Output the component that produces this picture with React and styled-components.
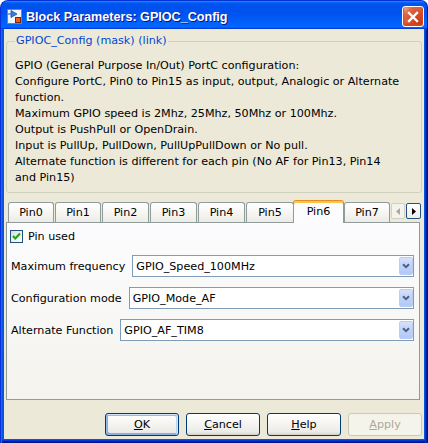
import React from 'react';
import styled, { createGlobalStyle } from 'styled-components';

const Global = createGlobalStyle`
  html, body { margin: 0; padding: 0; background: #ffffff; }
  body { font-family: "DejaVu Sans", Tahoma, sans-serif; font-size: 11.15px; color: #000; }
  #root { width: 428px; height: 443px; }
  * { box-sizing: border-box; }
`;

const Window = styled.div`
  width: 428px;
  height: 443px;
  display: flex;
  flex-direction: column;
`;

const TitleBar = styled.div`
  height: 29px;
  flex: none;
  display: flex;
  align-items: center;
  padding: 3px 3px 0 6px;
  border-top: 1px solid #0831d9;
  border-left: 1px solid #0831d9;
  border-right: 1px solid #001ea0;
  border-radius: 8px 7px 0 0;
  background: linear-gradient(180deg, #0997ff, #0053ee 8%, #0050ee 40%, #0066ff 88%, #0066ff 93%, #005bff 95%, #003dd7 96%, #003dd7);
`;

const TitleText = styled.div`
  flex: 1;
  margin-left: 4px;
  font-family: "Liberation Sans", Arial, sans-serif;
  font-weight: bold;
  font-size: 12.6px;
  color: #ffffff;
  text-shadow: 1px 1px #0f1089;
  white-space: nowrap;
`;

const CloseButton = styled.div`
  width: 22px;
  height: 21px;
  border: 1px solid #ffffff;
  border-radius: 3px;
  display: flex;
  align-items: center;
  justify-content: center;
  background: radial-gradient(circle at 85% 85%, #c23a12 0%, #d9522c 50%, #e06a48 72%, #f3b7a4 94%, #ffffff 100%);
  box-shadow: inset 0 -1px 2px 1px #d4461e;
`;

const Frame = styled.div`
  flex: 1;
  display: flex;
  padding: 0 4px 4px;
  background: #0855dd;
  box-shadow: inset 1px 0 #0831d9, inset 2px 0 #166aee, inset -1px 0 #00138c, inset -2px 0 #001ea0,
    inset -3px 0 #003bda, inset 0 -1px #00138c, inset 0 -2px #001ea0, inset 0 -3px #003bda;
`;

const Content = styled.div`
  flex: 1;
  display: flex;
  flex-direction: column;
  background: #ece9d8;
  padding: 0 2px 3px 2px;
`;

const GroupBox = styled.fieldset`
  margin: 4px 0 0 0;
  padding: 9px 8px 6px 8px;
  border: 1px solid #d0d0bf;
  border-radius: 3px;
  min-width: 0;
`;

const GroupLegend = styled.legend`
  padding: 0 1px;
  line-height: 16px;
  color: #0046d5;
`;

const Description = styled.div`
  line-height: 16px;
  white-space: nowrap;
`;

const TabArea = styled.div`
  margin: 7px 2px 0 0;
  display: flex;
  flex-direction: column;
`;

const TabStrip = styled.div`
  height: 22px;
  display: flex;
  align-items: flex-end;
  padding-left: 2px;
`;

const TabList = styled.div`
  flex: 1;
  display: flex;
  align-items: flex-end;
  gap: 1px;
  height: 100%;
`;

const Tab = styled.div`
  position: relative;
  width: ${p => (p.$active ? p.$w + 3 : p.$w)}px;
  height: ${p => (p.$active ? 23 : 20)}px;
  margin: ${p => (p.$active ? '0 -1px -1px -2px' : '0')};
  display: flex;
  align-items: center;
  justify-content: center;
  border: 1px solid #919b9c;
  border-bottom: none;
  border-radius: 3px 3px 0 0;
  background: ${p => (p.$active ? '#fcfcfe' : 'linear-gradient(180deg, #ffffff 0%, #f7f7f4 45%, #ecebe6 100%)')};
  ${p => p.$active && `
    border-top: 1px solid #e68b2c;
    box-shadow: inset 0 2px #ffc83c;
    z-index: 2;
    padding-bottom: 1px;
  `}
`;

const ScrollGroup = styled.div`
  align-self: flex-start;
  margin: 3px -1px 0 0;
  display: flex;
  gap: 1px;
`;

const ScrollButton = styled.div`
  width: ${p => p.$w}px;
  height: 16px;
  display: flex;
  align-items: center;
  justify-content: center;
  border-radius: 2px;
  border: 1px solid ${p => (p.$disabled ? '#d2d0c4' : '#1c5180')};
  background: ${p => (p.$disabled ? '#f4f3ee' : 'linear-gradient(180deg, #ffffff, #eeede8)')};
`;

const Panel = styled.div`
  height: 178px;
  border: 1px solid #919b9c;
  background: linear-gradient(180deg, #fcfcfe 0%, #f4f3ee 100%);
  padding: 7px 5px 0 4px;
  display: flex;
  flex-direction: column;
`;

const CheckRow = styled.label`
  display: flex;
  align-items: center;
  gap: 5px;
  height: 13px;
  margin-left: -1px;
`;

const CheckBox = styled.span`
  width: 13px;
  height: 13px;
  border: 1px solid #1c5180;
  background: linear-gradient(135deg, #dcdcd7 0%, #ffffff 100%);
  display: flex;
  align-items: center;
  justify-content: center;
`;

const Fields = styled.div`
  margin-top: 12px;
  display: flex;
  flex-direction: column;
  gap: 10px;
`;

const FieldRow = styled.div`
  display: flex;
  align-items: center;
  height: 22px;
`;

const FieldLabel = styled.span`
  white-space: nowrap;
`;

const Combo = styled.div`
  flex: 1;
  margin-left: 7px;
  height: 22px;
  border: 1px solid #7f9db9;
  background: #ffffff;
  display: flex;
  align-items: center;
  padding: 1px 0 1px 3px;
`;

const ComboValue = styled.span`
  flex: 1;
  white-space: nowrap;
`;

const ComboButton = styled.span`
  width: 14px;
  align-self: stretch;
  display: flex;
  align-items: center;
  justify-content: center;
  border: 1px solid #bacdf5;
  border-radius: 2px;
  background: linear-gradient(180deg, #d5e1fc 0%, #c0d2fa 50%, #b3c8f6 100%);
`;

const ButtonRow = styled.div`
  margin-top: 13px;
  display: flex;
  justify-content: flex-end;
  gap: 7px;
`;

const Button = styled.div`
  width: 74px;
  height: 23px;
  display: flex;
  align-items: center;
  justify-content: center;
  border-radius: 3px;
  border: 1px solid ${p => (p.$disabled ? '#cac8bb' : '#003c74')};
  color: ${p => (p.$disabled ? '#aca899' : '#000000')};
  background: ${p => (p.$disabled ? '#f5f4ea' : 'linear-gradient(180deg, #ffffff, #ecebe6 86%, #d6d0c5)')};
  ${p => p.$default && `
    box-shadow: inset -1px 1px #cee7ff, inset 1px 2px #98b8ea, inset -2px 2px #bcd4f6, inset 1px -1px #89ade4, inset 2px -2px #89ade4;
  `}
  u { text-decoration: underline; }
`;

const BlockIcon = () => (
  <svg width="15" height="15" viewBox="0 0 15 15">
    <rect x="0.5" y="0.5" width="14" height="14" fill="#f2f6fd" stroke="#5f86cc" />
    <line x1="1" y1="5" x2="4" y2="5" stroke="#1f4fa8" />
    <polygon points="4,1.5 10,5 4,8.5" fill="#3a7be0" stroke="#1f4fa8" strokeWidth="0.8" />
    <rect x="8.5" y="8.5" width="5" height="5" fill="#f05a23" stroke="#7a2800" />
  </svg>
);

const CloseIcon = () => (
  <svg width="12" height="12" viewBox="0 0 12 12">
    <path d="M2 2 L10 10 M10 2 L2 10" stroke="#ffffff" strokeWidth="2.4" strokeLinecap="square" />
  </svg>
);

const Chevron = () => (
  <svg width="8" height="6" viewBox="0 0 8 6">
    <path d="M1 1.2 L4 4.2 L7 1.2" stroke="#4d6185" strokeWidth="2" fill="none" />
  </svg>
);

const Check = () => (
  <svg width="11" height="11" viewBox="0 0 11 11">
    <path d="M2 5 L4.3 7.5 L9 2.6" stroke="#21a121" strokeWidth="2.1" fill="none" />
  </svg>
);

const tabs = [
  { label: 'Pin0', w: 46 },
  { label: 'Pin1', w: 46 },
  { label: 'Pin2', w: 47 },
  { label: 'Pin3', w: 47 },
  { label: 'Pin4', w: 47 },
  { label: 'Pin5', w: 48 },
  { label: 'Pin6', w: 48, active: true },
  { label: 'Pin7', w: 46 },
];

const fields = [
  { label: 'Maximum frequency', value: 'GPIO_Speed_100MHz' },
  { label: 'Configuration mode', value: 'GPIO_Mode_AF' },
  { label: 'Alternate Function', value: 'GPIO_AF_TIM8' },
];

const lines = [
  'GPIO (General Purpose In/Out) PortC configuration:',
  'Configure PortC, Pin0 to Pin15 as input, output, Analogic or Alternate',
  'function.',
  'Maximum GPIO speed is 2Mhz, 25Mhz, 50Mhz or 100Mhz.',
  'Output is PushPull or OpenDrain.',
  'Input is PullUp, PullDown, PullUpPullDown or No pull.',
  'Alternate function is different for each pin (No AF for Pin13, Pin14',
  'and Pin15)',
];

export default function App() {
  return (
    <>
      <Global />
      <Window>
        <TitleBar>
          <BlockIcon />
          <TitleText>Block Parameters: GPIOC_Config</TitleText>
          <CloseButton><CloseIcon /></CloseButton>
        </TitleBar>
        <Frame>
          <Content>
            <GroupBox>
              <GroupLegend>GPIOC_Config (mask) (link)</GroupLegend>
              <Description>
                {lines.map((l, i) => (
                  <React.Fragment key={i}>{l}{i < lines.length - 1 && <br />}</React.Fragment>
                ))}
              </Description>
            </GroupBox>
            <TabArea>
              <TabStrip>
                <TabList>
                  {tabs.map(t => (
                    <Tab key={t.label} $w={t.w} $active={t.active}>{t.label}</Tab>
                  ))}
                </TabList>
                <ScrollGroup>
                  <ScrollButton $w={14} $disabled>
                    <svg width="4" height="7" viewBox="0 0 4 7"><polygon points="4,0 0,3.5 4,7" fill="#aca899" /></svg>
                  </ScrollButton>
                  <ScrollButton $w={15}>
                    <svg width="4" height="7" viewBox="0 0 4 7"><polygon points="0,0 4,3.5 0,7" fill="#000000" /></svg>
                  </ScrollButton>
                </ScrollGroup>
              </TabStrip>
              <Panel>
                <CheckRow>
                  <CheckBox><Check /></CheckBox>
                  <span>Pin used</span>
                </CheckRow>
                <Fields>
                  {fields.map(f => (
                    <FieldRow key={f.label}>
                      <FieldLabel>{f.label}</FieldLabel>
                      <Combo>
                        <ComboValue>{f.value}</ComboValue>
                        <ComboButton><Chevron /></ComboButton>
                      </Combo>
                    </FieldRow>
                  ))}
                </Fields>
              </Panel>
            </TabArea>
            <ButtonRow>
              <Button $default><span><u>O</u>K</span></Button>
              <Button><span><u>C</u>ancel</span></Button>
              <Button><span><u>H</u>elp</span></Button>
              <Button $disabled><span><u>A</u>pply</span></Button>
            </ButtonRow>
          </Content>
        </Frame>
      </Window>
    </>
  );
}
